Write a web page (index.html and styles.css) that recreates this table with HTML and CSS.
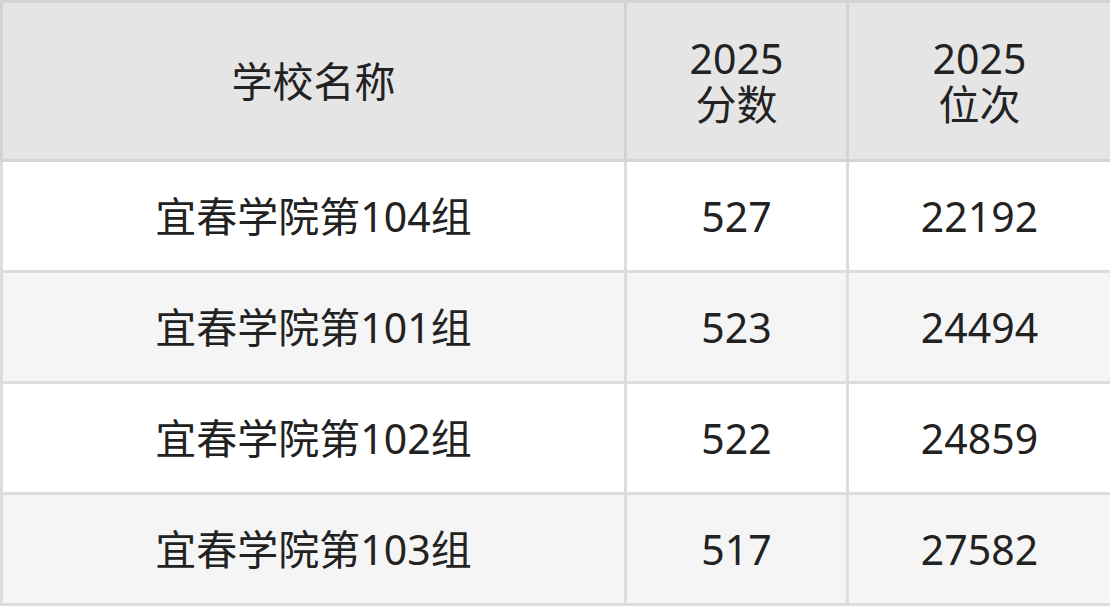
FILE: index.html
```html
<!DOCTYPE html>
<html lang="zh-CN">
<head>
<meta charset="utf-8">
<link rel="stylesheet" href="styles.css">
</head>
<body>
<table class="score-table">
  <colgroup>
    <col class="col-name">
    <col class="col-score">
    <col class="col-rank">
  </colgroup>
  <thead>
    <tr>
      <th>学校名称</th>
      <th>2025<br>分数</th>
      <th>2025<br>位次</th>
    </tr>
  </thead>
  <tbody>
    <tr><td>宜春学院第104组</td><td>527</td><td>22192</td></tr>
    <tr><td>宜春学院第101组</td><td>523</td><td>24494</td></tr>
    <tr><td>宜春学院第102组</td><td>522</td><td>24859</td></tr>
    <tr><td>宜春学院第103组</td><td>517</td><td>27582</td></tr>
  </tbody>
</table>
</body>
</html>
```

FILE: styles.css
```css
html, body {
  margin: 0;
  padding: 0;
  background: #ffffff;
}

.score-table {
  width: 1110px;
  border-collapse: collapse;
  table-layout: fixed;
  font-family: "Noto Sans", "Noto Sans CJK SC", sans-serif;
  font-size: 41px;
  color: #222222;
}

.col-name { width: 624px; }
.col-score { width: 222px; }
.col-rank { width: 264px; }

.score-table th,
.score-table td {
  border: 3px solid #dddddd;
  text-align: center;
  vertical-align: middle;
  padding: 0;
  font-weight: normal;
}

.score-table th {
  background: #e5e5e5;
  border-color: #d4d4d4;
  height: 156px;
  line-height: 46px;
}

.score-table td {
  height: 108px;
  line-height: 48px;
}

.score-table tbody tr:nth-child(odd) td {
  background: #ffffff;
}

.score-table tbody tr:nth-child(even) td {
  background: #f5f5f5;
}
```
